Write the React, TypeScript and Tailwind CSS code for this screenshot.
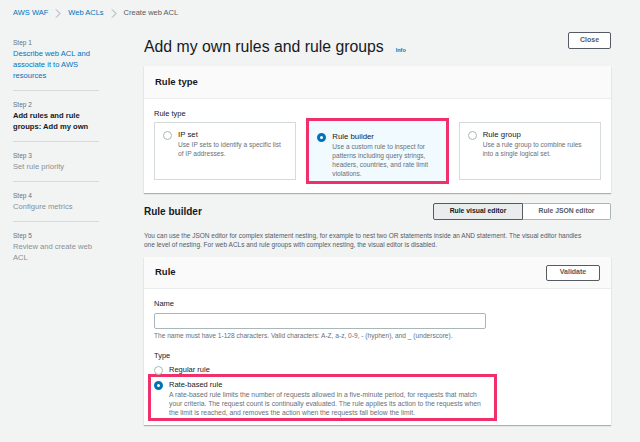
import React from 'react'

const font = { fontFamily: '"Liberation Sans", Arial, sans-serif' }

function Radio({ checked }: { checked?: boolean }) {
  return checked ? (
    <span className="mt-[2px] box-border size-[9px] shrink-0 rounded-full border-[3px] border-[#0073bb] bg-white" />
  ) : (
    <span className="mt-[2px] box-border size-[9px] shrink-0 rounded-full border border-[#aab7b8] bg-white" />
  )
}

function Chevron() {
  return (
    <svg width="6" height="9" viewBox="0 0 6 9">
      <path d="M1 0.5 L5 4.5 L1 8.5" fill="none" stroke="#879196" strokeWidth="0.8" />
    </svg>
  )
}

function Step({ n, title, current, link, last }: { n: number; title: string; current?: boolean; link?: boolean; last?: boolean }) {
  return (
    <div className={`pb-[9px] ${last ? '' : 'mb-[8px] border-b border-[#d5dbdb]'}`}>
      <div className="text-[6.5px] leading-[11px] text-[#687078]">Step {n}</div>
      <div
        className={`text-[7.6px] leading-[11px] ${
          current ? 'font-bold text-[#16191f]' : link ? 'text-[#0073bb]' : 'text-[#879196]'
        }`}
      >
        {title}
      </div>
    </div>
  )
}

function Tile({ title, desc, selected }: { title: string; desc: string; selected?: boolean }) {
  return (
    <div
      className={
        selected
          ? '-my-[4px] flex gap-[6px] border-[3px] border-[#f0306a] bg-[#f1faff] pt-[10px] pr-[10px] pl-[8px]'
          : 'flex gap-[6px] border border-[#d5dbdb] bg-white pt-[6px] pr-[12px] pl-[8px]'
      }
    >
      <Radio checked={selected} />
      <div>
        <div className="text-[7.8px] leading-[11px] text-[#16191f]">{title}</div>
        <div className="text-[6.6px] leading-[9px] text-[#687078]">{desc}</div>
      </div>
    </div>
  )
}

export default function App() {
  return (
    <div className="h-[442px] w-[640px] overflow-hidden bg-[#f2f3f3]" style={font}>
      <nav className="flex items-center gap-[7px] px-[13px] pt-[8px] text-[7.5px] leading-[10px]">
        <span className="text-[#0073bb]">AWS WAF</span>
        <Chevron />
        <span className="text-[#0073bb]">Web ACLs</span>
        <Chevron />
        <span className="text-[#545b64]">Create web ACL</span>
      </nav>

      <div className="flex pt-[14px]">
        <aside className="mt-[5px] ml-[13px] w-[86px]">
          <Step n={1} title="Describe web ACL and associate it to AWS resources" link />
          <Step n={2} title="Add rules and rule groups: Add my own" current />
          <Step n={3} title="Set rule priority" />
          <Step n={4} title="Configure metrics" />
          <Step n={5} title="Review and create web ACL" last />
        </aside>

        <main className="ml-[45px] w-[467px]">
          <div className="flex items-start justify-between">
            <div className="mt-[5px] flex items-baseline gap-[12px]">
              <h1 className="text-[15.8px] leading-[20px] text-[#16191f]">Add my own rules and rule groups</h1>
              <span className="text-[5.5px] font-bold text-[#0073bb]">Info</span>
            </div>
            <button className="h-[17px] w-[43px] rounded-[2px] border border-[#545b64] bg-white text-[7px] font-bold text-[#545b64]">
              Close
            </button>
          </div>

          <section className="mt-[9px] bg-white shadow-[0_1px_1px_rgba(0,28,36,0.3)]">
            <div className="flex h-[33px] items-center border-b border-[#eaeded] bg-[#fafafa] px-[11px]">
              <h2 className="text-[9.5px] font-bold text-[#16191f]">Rule type</h2>
            </div>
            <div className="px-[10px] pt-[10px] pb-[13px]">
              <div className="text-[7.5px] leading-[10px] text-[#16191f]">Rule type</div>
              <div className="mt-[3px] grid h-[58px] grid-cols-3 gap-[10px]">
                <Tile title="IP set" desc="Use IP sets to identify a specific list of IP addresses." />
                <Tile
                  title="Rule builder"
                  desc="Use a custom rule to inspect for patterns including query strings, headers, countries, and rate limit violations."
                  selected
                />
                <Tile title="Rule group" desc="Use a rule group to combine rules into a single logical set." />
              </div>
            </div>
          </section>

          <div className="mt-[10px] flex items-center justify-between">
            <h2 className="text-[10px] font-bold text-[#16191f]">Rule builder</h2>
            <div className="flex">
              <button className="h-[17px] w-[90px] rounded-l-[2px] border border-[#545b64] bg-[#eaeded] text-[6.8px] font-bold text-[#16191f]">
                Rule visual editor
              </button>
              <button className="h-[17px] w-[88px] rounded-r-[2px] border border-l-0 border-[#aab7b8] bg-white text-[6.8px] font-bold text-[#545b64]">
                Rule JSON editor
              </button>
            </div>
          </div>

          <p className="mt-[11px] pr-[18px] text-[6.5px] leading-[9px] text-[#545b64]">
            You can use the JSON editor for complex statement nesting, for example to nest two OR statements inside an AND statement. The visual editor handles one level of nesting. For web ACLs and rule groups with complex nesting, the visual editor is disabled.
          </p>

          <section className="mt-[8px] bg-white shadow-[0_1px_1px_rgba(0,28,36,0.3)]">
            <div className="flex h-[32px] items-center justify-between border-b border-[#eaeded] bg-[#fafafa] pr-[11px] pl-[11px]">
              <h2 className="text-[9.5px] font-bold text-[#16191f]">Rule</h2>
              <button className="h-[16px] w-[54px] rounded-[2px] border border-[#545b64] bg-white text-[7px] font-bold text-[#545b64]">
                Validate
              </button>
            </div>
            <div className="px-[10px] pt-[10px] pb-[4px]">
              <div className="text-[7.5px] leading-[10px] text-[#16191f]">Name</div>
              <div className="mt-[4px] h-[16px] w-[332px] rounded-[2px] border border-[#aab7b8] bg-white" />
              <div className="mt-[3px] text-[6.6px] leading-[8px] text-[#687078]">
                The name must have 1-128 characters. Valid characters: A-Z, a-z, 0-9, - (hyphen), and _ (underscore).
              </div>
              <div className="mt-[11px] text-[7.5px] leading-[10px] text-[#16191f]">Type</div>
              <div className="mt-[3px] flex gap-[6px]">
                <Radio />
                <span className="text-[7.5px] leading-[12px] text-[#16191f]">Regular rule</span>
              </div>
              <div className="-mt-[2px] -ml-[6px] flex w-[349px] gap-[6px] border-[3px] border-[#f0306a] px-[3px] pt-[2px] pb-[1px]">
                <Radio checked />
                <div>
                  <div className="text-[7.5px] leading-[11px] text-[#16191f]">Rate-based rule</div>
                  <div className="pr-[4px] text-[6.8px] leading-[9px] text-[#687078]">
                    A rate-based rule limits the number of requests allowed in a five-minute period, for requests that match your criteria. The request count is continually evaluated. The rule applies its action to the requests when the limit is reached, and removes the action when the requests fall below the limit.
                  </div>
                </div>
              </div>
            </div>
          </section>
        </main>
      </div>
    </div>
  )
}
